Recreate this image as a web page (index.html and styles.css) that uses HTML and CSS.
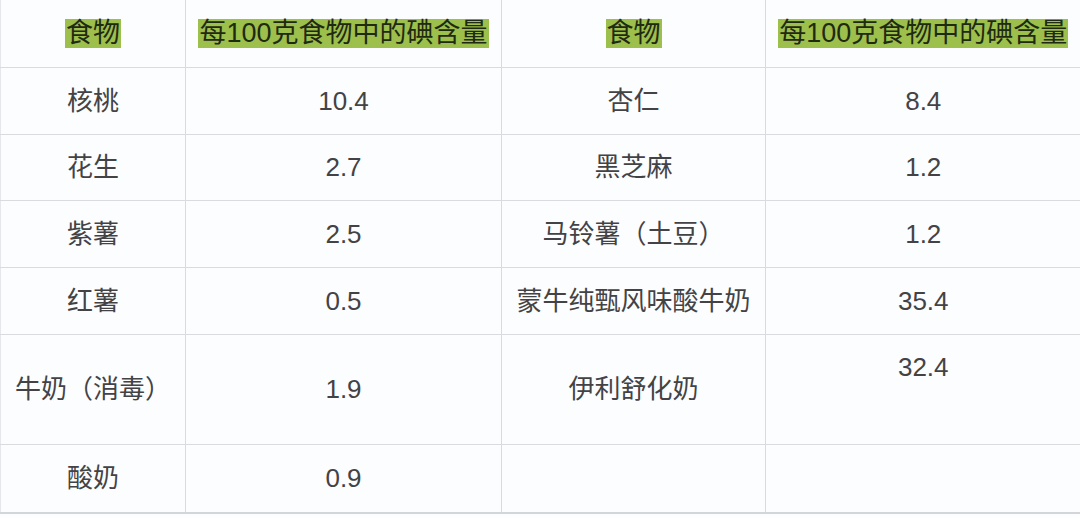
FILE: index.html
```html
<!DOCTYPE html>
<html lang="zh">
<head>
<meta charset="utf-8">
<link rel="stylesheet" href="styles.css">
</head>
<body>
<table class="iodine">
  <colgroup>
    <col class="c1"><col class="c2"><col class="c3"><col class="c4">
  </colgroup>
  <tr class="r-head">
    <td><span class="hl">食物</span></td>
    <td><span class="hl">每100克食物中的碘含量</span></td>
    <td><span class="hl">食物</span></td>
    <td><span class="hl">每100克食物中的碘含量</span></td>
  </tr>
  <tr class="r1">
    <td>核桃</td><td>10.4</td><td>杏仁</td><td>8.4</td>
  </tr>
  <tr class="r2">
    <td>花生</td><td>2.7</td><td>黑芝麻</td><td>1.2</td>
  </tr>
  <tr class="r3">
    <td>紫薯</td><td>2.5</td><td>马铃薯（土豆）</td><td>1.2</td>
  </tr>
  <tr class="r4">
    <td>红薯</td><td>0.5</td><td>蒙牛纯甄风味酸牛奶</td><td>35.4</td>
  </tr>
  <tr class="r5">
    <td>牛奶（消毒）</td><td>1.9</td><td>伊利舒化奶</td><td class="top">32.4</td>
  </tr>
  <tr class="r6">
    <td>酸奶</td><td>0.9</td><td></td><td></td>
  </tr>
</table>
</body>
</html>
```

FILE: styles.css
```css
html, body {
  margin: 0;
  padding: 0;
  background: #fcfdfe;
}
body {
  width: 1080px;
  height: 517px;
  overflow: hidden;
}
.iodine {
  width: 1080px;
  border-collapse: collapse;
  table-layout: fixed;
  font-family: "Liberation Sans", "Noto Sans CJK SC", sans-serif;
  font-size: 26px;
  color: #434346;
}
.c1 { width: 185px; }
.c2 { width: 316px; }
.c3 { width: 264px; }
.c4 { width: 315px; }
.iodine td {
  border: 1px solid #dadbdf;
  text-align: center;
  vertical-align: middle;
  padding: 0;
  white-space: nowrap;
  line-height: 30px;
}
.num { font-size: 27px; }
.iodine tr:first-child td { border-top: none; }
.iodine td:last-child { border-right: none; }
.iodine td:first-child { border-left: 1px solid #e6e7ea; }
.iodine tr:last-child td { border-bottom: 2px solid #d4d5d9; }
.r-head { height: 67px; }
.r1 { height: 67px; }
.r2 { height: 66px; }
.r3 { height: 67px; }
.r4 { height: 67px; }
.r5 { height: 110px; }
.r6 { height: 69px; }
.iodine td.top {
  vertical-align: top;
  padding-top: 17px;
}
.hl {
  display: inline-block;
  background: #9dbf4c;
  color: #1f2a12;
  font-size: 27px;
  line-height: 29px;
  padding: 0 1px;
}
```
